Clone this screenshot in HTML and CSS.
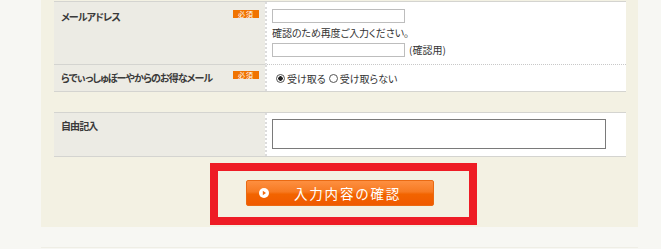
FILE: index.html
```html
<!DOCTYPE html>
<html lang="ja">
<head>
<meta charset="utf-8">
<link rel="stylesheet" href="styles.css">
</head>
<body>
<div class="panel">
  <div class="tbl">
    <div class="row row-mail">
      <div class="th th-mail"><span class="lbl">メールアドレス</span><span class="req">必須</span></div>
      <div class="td td-mail">
        <input class="txt" type="text">
        <p class="note">確認のため再度ご入力ください。</p>
        <div class="confirm"><input class="txt" type="text"><span class="note2">(確認用)</span></div>
      </div>
    </div>
    <div class="row">
      <div class="th th-news"><span class="lbl">らでぃっしゅぼーやからのお得なメール</span><span class="req">必須</span></div>
      <div class="td td-news">
        <label class="opt"><input class="rd" type="radio" name="m" checked>受け取る</label>
        <label class="opt"><input class="rd" type="radio" name="m">受け取らない</label>
      </div>
    </div>
  </div>
  <div class="tbl tbl2">
    <div class="row">
      <div class="th th-free"><span class="lbl">自由記入</span></div>
      <div class="td td-free"><textarea class="area"></textarea></div>
    </div>
  </div>
  <div class="highlight">
    <button class="submit" type="button"><span class="play"><svg width="10" height="10" viewBox="0 0 10 10"><circle cx="5" cy="5" r="5" fill="#fff"/><path d="M3.8 2.8 L7 5 L3.8 7.2 Z" fill="#f26a0e"/></svg></span><span class="btxt">入力内容の確認</span></button>
  </div>
</div>
<div class="next"></div>
</body>
</html>
```
FILE: styles.css
```css
html, body { margin: 0; padding: 0; }
body {
  background: #f7f7f3;
  font-family: "Noto Sans CJK JP", "Noto Sans", sans-serif;
  color: #333;
  width: 661px;
  height: 249px;
  overflow: hidden;
}
.panel {
  margin-left: 41px;
  width: 597px;
  box-sizing: border-box;
  background: #f3f1e3;
  padding: 1px 12px 2px 13px;
}
.tbl { border-top: 1px solid #d4d4d0; }
.tbl2 { margin-top: 20px; }
.row {
  display: grid;
  grid-template-columns: 211px 361px;
  border-bottom: 1px solid #d4d4d0;
}
.row-mail { border-bottom: 0; }
.th {
  background: #ecebe4;
  display: flex;
  justify-content: space-between;
  align-items: flex-start;
  padding: 9px 6px 0 7px;
}
.th-news { padding-top: 7px; }
.th-free { padding-top: 7px; }
.lbl {
  font-size: 10px;
  line-height: 12px;
  font-weight: bold;
  color: #3a3a3a;
  font-feature-settings: "palt";
  letter-spacing: -0.9px;
}
.req {
  width: 26px;
  height: 8px;
  background: #f07300;
  color: #fff;
  font-size: 7px;
  line-height: 8px;
  text-align: center;
  margin-top: -1px;
  letter-spacing: 1px;
}
.td {
  background: #fff;
  border-left: 2px dotted #dcdcdc;
  padding-left: 5px;
}
.th-mail { border-bottom: 1px solid #d4d4d0; }
.td-mail {
  padding-top: 7px;
  padding-bottom: 7px;
  border-bottom: 1px dotted #c8c8c8;
}
.txt {
  display: block;
  width: 133px;
  height: 14px;
  box-sizing: border-box;
  border: 1px solid #bdbdbd;
  margin: 0;
  padding: 0;
}
.note {
  margin: 4px 0;
  font-size: 10px;
  line-height: 12px;
  color: #333;
  font-feature-settings: "palt";
  letter-spacing: -0.1px;
}
.confirm { display: flex; align-items: center; gap: 4px; }
.note2 {
  font-size: 10px;
  line-height: 12px;
  color: #333;
  font-feature-settings: "palt";
}
.td-news {
  height: 26px;
  display: flex;
  align-items: center;
  padding-left: 9px;
  padding-top: 1px;
  box-sizing: border-box;
}
.opt {
  display: flex;
  align-items: center;
  font-size: 10px;
  line-height: 12px;
  color: #333;
  font-feature-settings: "palt";
  margin-right: 3px;
}
.rd {
  appearance: none;
  -webkit-appearance: none;
  width: 9px;
  height: 9px;
  border: 1px solid #555;
  border-radius: 50%;
  margin: 0 2px 0 0;
  box-sizing: border-box;
  background: #fff;
}
.rd:checked { background: radial-gradient(circle, #222 0 2px, #fff 2.5px); }
.td-free { padding-top: 6px; padding-bottom: 7px; }
.area {
  display: block;
  width: 334px;
  height: 30px;
  box-sizing: border-box;
  border: 1px solid #7a7a7a;
  margin: 0;
  padding: 0;
  resize: none;
}
.highlight {
  margin-top: 6px;
  margin-left: 156px;
  width: 267px;
  height: 62px;
  box-sizing: border-box;
  border: 8px solid #ee1c25;
  padding: 9px 0 0 28px;
}
.submit {
  display: flex;
  align-items: center;
  width: 188px;
  height: 26px;
  box-sizing: border-box;
  border: 1px solid #ea6a12;
  border-radius: 2px;
  background: linear-gradient(#fd8f40 0%, #f77a22 45%, #f26400 55%, #f05a00 100%);
  padding: 0 0 0 12px;
  margin: 0;
  cursor: pointer;
}
.play { display: flex; width: 10px; height: 10px; }
.btxt {
  margin-left: 25px;
  font-family: "Noto Sans CJK JP", sans-serif;
  font-size: 13.5px;
  line-height: 16px;
  color: #fff;
  letter-spacing: 1.8px;
}
.next {
  margin: 20px 0 0 41px;
  width: 597px;
  height: 2px;
  border-top: 1px solid #efeee6;
}
```
